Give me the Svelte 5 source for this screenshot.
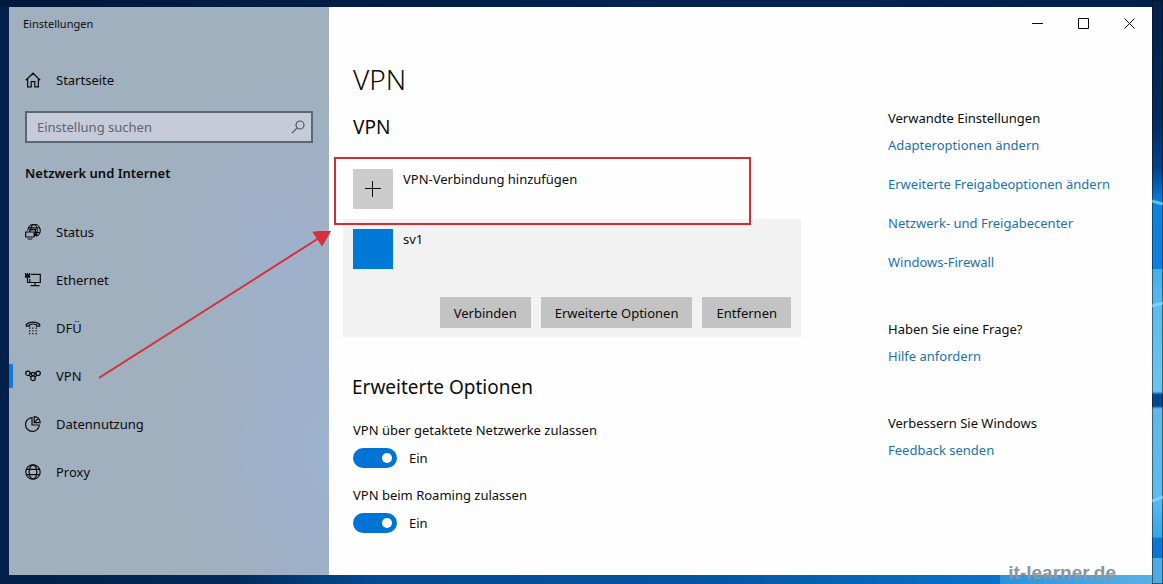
<script>
  const nav = [
    { id: 'status', label: 'Status' },
    { id: 'ethernet', label: 'Ethernet' },
    { id: 'dialup', label: 'DFÜ' },
    { id: 'vpn', label: 'VPN' },
    { id: 'usage', label: 'Datennutzung' },
    { id: 'proxy', label: 'Proxy' }
  ];

  const groups = [
    {
      title: 'Verwandte Einstellungen',
      links: [
        'Adapteroptionen ändern',
        'Erweiterte Freigabeoptionen ändern',
        'Netzwerk- und Freigabecenter',
        'Windows-Firewall'
      ]
    },
    { title: 'Haben Sie eine Frage?', links: ['Hilfe anfordern'] },
    { title: 'Verbessern Sie Windows', links: ['Feedback senden'] }
  ];

  let current = $state('vpn');
  let search = $state('');
  let options = $state([
    { id: 'metered', label: 'VPN über getaktete Netzwerke zulassen', on: true },
    { id: 'roaming', label: 'VPN beim Roaming zulassen', on: true }
  ]);
</script>

{#snippet icon(id)}
  <svg class="icon" viewBox="0 0 16 16" aria-hidden="true">
    {#if id === 'home'}
      <path d="M.8 8.2 8 1.200l7.200 7M2.600 6.800v8h3.600V9.600h3.600v5.200h3.600v-8" />
    {:else if id === 'status'}
      <path d="M2.800 6.500A6.200 6.200 0 1 1 11 12.300M3.800 3.800h9.800M10.500 8.500h4.300M5.800 6.500C6 3 7.300.7 9 .7s3.200 2.600 3.200 6c0 2-.4 3.800-1.200 5" />
      <path d="M4.800 8V5.700h5.600v5.600H9.200M.7 8h8.400v5H.7zM2.500 15h4.800" />
    {:else if id === 'ethernet'}
      <path d="M6 2.300h9.300v8.200H4.800V7M10 10.500v3M5.500 13.600h9M2.500 6v4.500h2.300" />
      <path class="solid" d="M0 1h1.200v1.200h.8V1h1.200v1.200H4V1h1.200v4.700H0z" />
    {:else if id === 'dialup'}
      <path d="M1.300 6.200V4.500C4 1.300 12 1.300 14.700 4.500v1.700h-3.200V4.700C9.500 3.900 6.500 3.900 4.500 4.700v1.500z" />
      <path class="solid" d="M4 7.500h1.300v1.300H4zM7.300 7.500h1.300v1.300H7.300zM10.600 7.500h1.300v1.300h-1.300zM4 10.300h1.300v1.300H4zM7.300 10.300h1.300v1.300H7.300zM10.600 10.300h1.300v1.300h-1.300zM4 13h1.300v1.300H4zM7.300 13h1.300v1.300H7.300zM10.600 13h1.300v1.300h-1.300z" />
    {:else if id === 'vpn'}
      <circle cx="2.900" cy="5.300" r="2.200" />
      <circle cx="8" cy="6" r="1.700" />
      <circle cx="13.100" cy="5.300" r="2.200" />
      <circle cx="8" cy="10.300" r="2.300" />
      <path d="m4 7.200 2 2M12 7.200l-2 2M5 5.200l1.400.4M11 5.200l-1.400.4" />
    {:else if id === 'usage'}
      <path d="M7 1.600A6.900 6.900 0 1 0 14.300 9H7z" />
      <path d="M9.200.7v6h6C15.200 3.400 12.600.7 9.200.7zM9.200 6.700l4-4" />
    {:else if id === 'proxy'}
      <circle cx="8" cy="8" r="7.200" />
      <ellipse cx="8" cy="8" rx="3.800" ry="7.200" />
      <path d="M1.500 5.300h13M1.500 10.700h13" />
    {/if}
  </svg>
{/snippet}

<div class="desktop">
  <svg class="wallpaper" viewBox="0 0 11 584" preserveAspectRatio="none" aria-hidden="true">
    <defs>
      <linearGradient id="sky" x1="0" y1="0" x2="0" y2="1">
        <stop offset="0" stop-color="#03204a" />
        <stop offset=".2" stop-color="#032a5c" />
        <stop offset=".29" stop-color="#04438c" />
        <stop offset=".35" stop-color="#0a84dc" />
        <stop offset=".46" stop-color="#0b7fdc" />
        <stop offset=".461" stop-color="#48aee8" />
        <stop offset=".55" stop-color="#62bdec" />
        <stop offset=".67" stop-color="#6dc3ee" />
        <stop offset=".676" stop-color="#03478c" />
        <stop offset=".695" stop-color="#03478c" />
        <stop offset=".7" stop-color="#62b6e6" />
        <stop offset=".85" stop-color="#5dbbed" />
        <stop offset=".92" stop-color="#38a5e8" />
        <stop offset=".921" stop-color="#0878d4" />
        <stop offset=".955" stop-color="#0878d4" />
        <stop offset=".956" stop-color="#4fabe4" />
        <stop offset="1" stop-color="#4fabe4" />
      </linearGradient>
    </defs>
    <rect width="11" height="584" fill="url(#sky)" />
    <path d="M0 201l11 3M0 306l11-3M0 501l11-4" stroke="#8fdcf8" stroke-width="3" opacity=".7" />
  </svg>

  <div class="window">
    <aside class="sidebar">
      <div class="caption">Einstellungen</div>
      <a class="item home" href="#home">{@render icon('home')}<span>Startseite</span></a>
      <div class="search">
        <input type="text" aria-label="Einstellung suchen" placeholder="Einstellung suchen" bind:value={search} />
        <button type="button" aria-label="Suchen">
          <svg class="icon" viewBox="0 0 16 16" aria-hidden="true">
            <circle cx="10" cy="6" r="4" />
            <path d="M7.200 8.800 2 14" />
          </svg>
        </button>
      </div>
      <h2 class="section">Netzwerk und Internet</h2>
      <nav>
        {#each nav as entry}
          <a
            class="item"
            class:active={current === entry.id}
            href={'#' + entry.id}
            onclick={() => (current = entry.id)}
          >
            {@render icon(entry.id)}<span>{entry.label}</span>
          </a>
        {/each}
      </nav>
    </aside>

    <main>
      <div class="controls">
        <button type="button" aria-label="Minimieren">
          <svg viewBox="0 0 11 11" aria-hidden="true"><path d="M0 5.500h11" /></svg>
        </button>
        <button type="button" aria-label="Maximieren">
          <svg viewBox="0 0 11 11" aria-hidden="true"><path d="M.5.500h10v10H.5z" /></svg>
        </button>
        <button type="button" aria-label="Schließen">
          <svg viewBox="0 0 11 11" aria-hidden="true"><path d="m.5.500 10 10M10.500.500l-10 10" /></svg>
        </button>
      </div>

      <div class="columns">
        <div class="content">
          <h1>VPN</h1>
          <h2>VPN</h2>

          <div class="add-row">
            <button type="button" class="entry">
              <span class="tile plus">
                <svg viewBox="0 0 16 16" aria-hidden="true"><path d="M7.500 0v16M0 7.500h16" /></svg>
              </span>
              <span>VPN-Verbindung hinzufügen</span>
            </button>
            <div class="marker"></div>
          </div>

          <section class="connection">
            <div class="entry">
              <span class="tile"></span>
              <span>sv1</span>
            </div>
            <div class="actions">
              <button type="button">Verbinden</button>
              <button type="button">Erweiterte Optionen</button>
              <button type="button">Entfernen</button>
            </div>
          </section>

          <h2 class="advanced">Erweiterte Optionen</h2>
          {#each options as option}
            <div class="option">
              <label for={option.id}>{option.label}</label>
              <div class="switch">
                <input id={option.id} type="checkbox" role="switch" bind:checked={option.on} />
                <span>{option.on ? 'Ein' : 'Aus'}</span>
              </div>
            </div>
          {/each}
        </div>

        <aside class="related">
          {#each groups as group}
            <section>
              <h3>{group.title}</h3>
              <ul>
                {#each group.links as link}
                  <li><a href="#help">{link}</a></li>
                {/each}
              </ul>
            </section>
          {/each}
        </aside>
      </div>
    </main>

    <svg class="arrow" viewBox="0 0 232 148" aria-hidden="true">
      <path d="M0 147 220 7" />
      <path class="head" d="M231 0 223 13.500 215 1.500z" />
    </svg>
  </div>

  <div class="watermark">it-learner.de</div>
</div>

<style>
  :global(body) {
    margin: 0;
  }

  .desktop {
    position: relative;
    box-sizing: border-box;
    display: flex;
    min-height: 100vh;
    padding: 7px 11px 9px 9px;
    background: linear-gradient(90deg, #02204a 0%, #022a5a 20%, #034a92 32%, #0454a2 60%, #0873cc 86%, #2b93dc 86%, #5cb2e8 100%);
    color: #0c0c0c;
    font: 13px/20px "Noto Sans", sans-serif;
    overflow: hidden;
  }

  .desktop::before {
    content: "";
    position: absolute;
    inset: 0 0 auto;
    height: 7px;
    background: linear-gradient(90deg, #02183c, #03234f 60%, #03204a);
  }

  .wallpaper {
    position: absolute;
    top: 0;
    right: 0;
    width: 11px;
    height: 100%;
  }

  .window {
    position: relative;
    display: grid;
    flex: 1;
    grid-template-columns: 320px 1fr;
    background: #fefefe;
  }

  h1,
  h2,
  h3,
  ul {
    margin: 0;
    padding: 0;
    font-weight: 400;
    list-style: none;
  }

  button,
  input {
    font: inherit;
    color: inherit;
  }

  button {
    padding: 0;
    border: 0;
    background: none;
  }

  a {
    color: inherit;
    text-decoration: none;
  }

  svg {
    fill: none;
    stroke: currentColor;
  }

  .icon {
    flex: none;
    width: 16px;
    height: 16px;
    stroke-width: 1.2;
  }

  .solid {
    fill: currentColor;
    stroke: none;
  }

  .sidebar {
    background:
      radial-gradient(ellipse at 105% 78%, #9db4d0 0%, #9eb0ca 14%, transparent 36%),
      radial-gradient(ellipse at 85% 42%, #9fb0cc 0%, transparent 36%),
      #a0b0bf;
  }

  .caption {
    padding: 0 14px;
    font-size: 11px;
    line-height: 34px;
  }

  .item {
    position: relative;
    display: flex;
    align-items: center;
    gap: 15px;
    height: 48px;
    padding: 0 16px;
  }

  .home {
    margin-top: 15px;
  }

  .active::before {
    content: "";
    position: absolute;
    left: 0;
    width: 4px;
    height: 24px;
    background: #1478d8;
  }

  .search {
    display: flex;
    align-items: center;
    box-sizing: border-box;
    height: 32px;
    margin: 7px 16px 20px;
    border: 2px solid #5b6774;
    background: #c6cad9;
    color: #4f5a68;
  }

  .search input {
    flex: 1;
    min-width: 0;
    padding: 0 10px;
    border: 0;
    outline: 0;
    background: none;
  }

  .search input::placeholder {
    color: #5d6673;
    opacity: 1;
  }

  .search button {
    display: flex;
    padding: 0 5px;
  }

  .section {
    padding: 0 16px;
    margin-bottom: 25px;
    font-size: 13px;
    font-weight: 600;
    line-height: 20px;
  }

  .controls {
    display: flex;
    justify-content: flex-end;
    height: 32px;
  }

  .controls button {
    display: grid;
    place-items: center;
    width: 46px;
  }

  .controls svg {
    width: 11px;
    height: 11px;
  }

  .columns {
    display: grid;
    grid-template-columns: 1fr 264px;
  }

  .content {
    max-width: 458px;
    padding: 20px 14px 0;
  }

  h1,
  .content h2,
  .option {
    margin-left: 10px;
  }

  h1 {
    font-size: 28px;
    font-weight: 300;
    line-height: 40px;
  }

  .content h2 {
    margin-top: 14px;
    font-size: 19px;
    line-height: 28px;
  }

  .add-row {
    position: relative;
    margin-top: 18px;
  }

  .marker {
    position: absolute;
    inset: -2px 50px -6px -9px;
    border: 2px solid #cf2e38;
    pointer-events: none;
  }

  .entry {
    display: flex;
    align-items: flex-start;
    gap: 10px;
    width: 100%;
    box-sizing: border-box;
    padding: 10px;
    text-align: left;
  }

  .tile {
    display: grid;
    place-items: center;
    width: 40px;
    height: 40px;
    background: #0078d7;
  }

  .plus {
    background: #ccc;
  }

  .plus svg {
    width: 16px;
    height: 16px;
  }

  .connection {
    padding-bottom: 9px;
    background: #f2f2f2;
  }

  .actions {
    display: flex;
    justify-content: flex-end;
    gap: 10px;
    padding: 18px 10px 0;
  }

  .actions button {
    height: 31px;
    padding: 0 14px;
    background: #c3c3c3;
  }

  .content .advanced {
    margin: 36px 0 19px 9px;
  }

  .option {
    margin-bottom: 17px;
  }

  .option label {
    display: block;
  }

  .switch {
    display: flex;
    align-items: center;
    gap: 12px;
    margin-top: 8px;
  }

  .switch input {
    appearance: none;
    display: flex;
    align-items: center;
    box-sizing: border-box;
    width: 44px;
    height: 20px;
    margin: 0;
    padding: 0 5px;
    border-radius: 10px;
    background: #8a8a8a;
  }

  .switch input::before {
    content: "";
    width: 10px;
    height: 10px;
    border-radius: 50%;
    background: #fff;
  }

  .switch input:checked {
    justify-content: flex-end;
    background: #0074d4;
  }

  .related {
    display: grid;
    align-content: start;
    gap: 47px;
    padding-top: 69px;
  }

  .related h3 {
    font-size: 13px;
  }

  .related ul {
    display: grid;
    gap: 19px;
    margin-top: 7px;
    color: #1a72aa;
  }

  .arrow {
    position: absolute;
    top: 224px;
    left: 90px;
    width: 232px;
    height: 148px;
    color: #d8303a;
    stroke-width: 2;
    pointer-events: none;
  }

  .head {
    fill: currentColor;
  }

  .watermark {
    position: absolute;
    right: 47px;
    bottom: 0;
    color: #8a96a0;
    font: bold 19px/22px "Liberation Sans", sans-serif;
  }
</style>
